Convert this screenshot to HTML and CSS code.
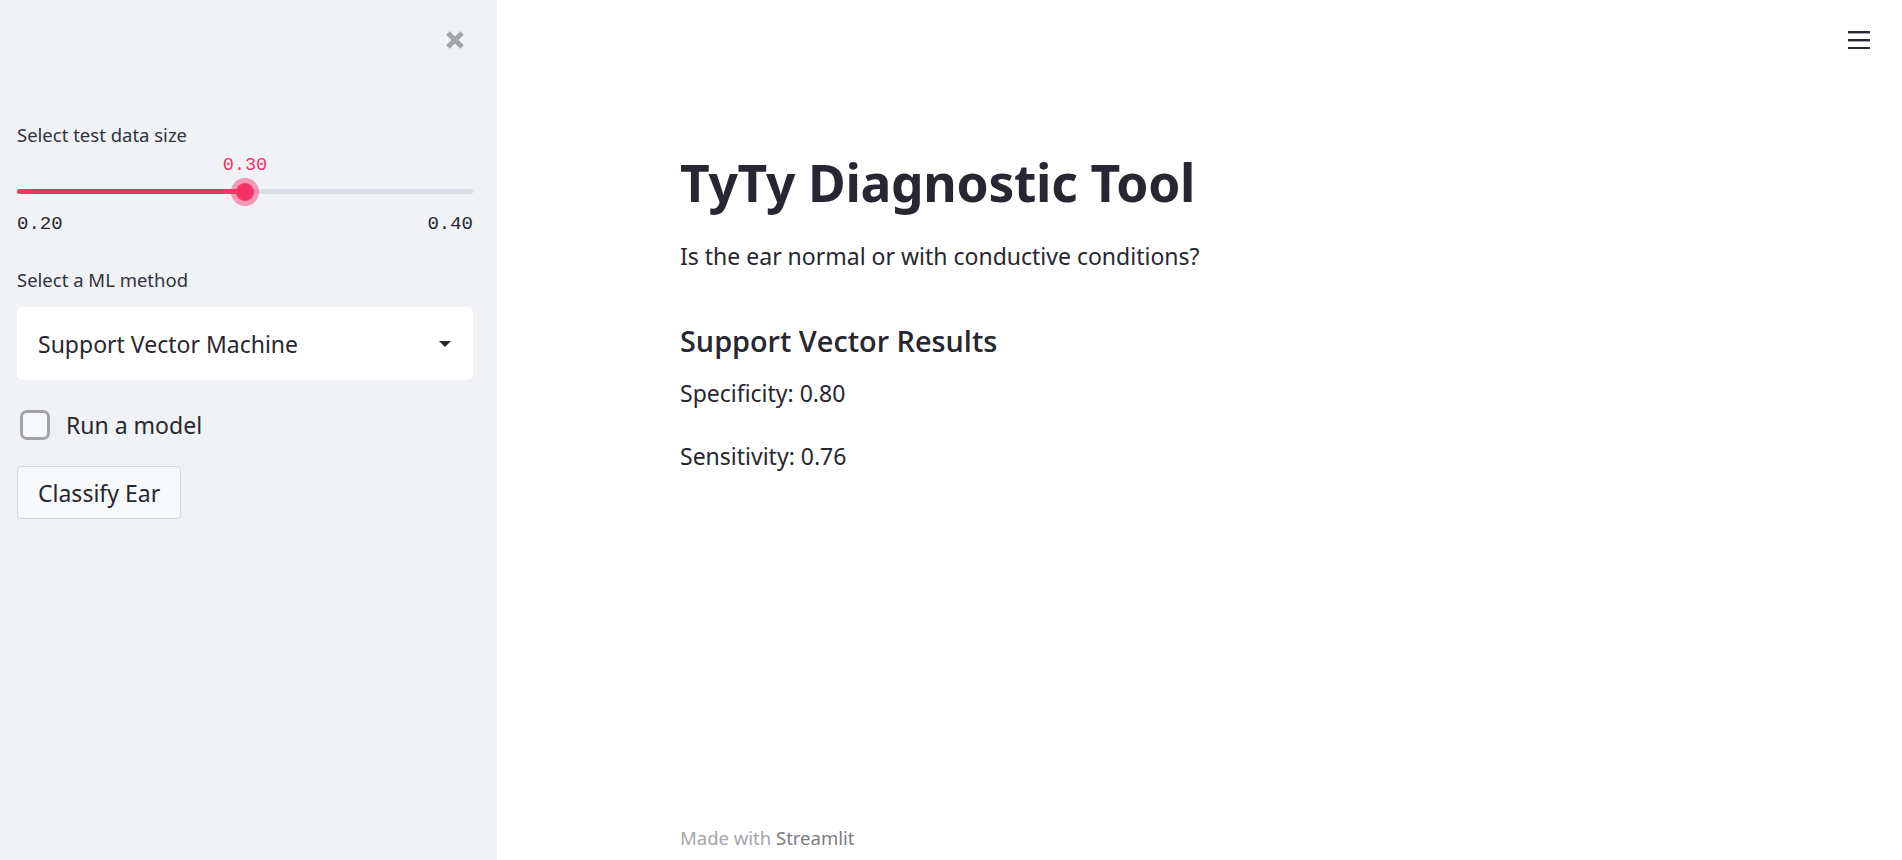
FILE: index.html
```html
<!DOCTYPE html>
<html lang="en">
<head>
<meta charset="utf-8">
<title>TyTy Diagnostic Tool</title>
<link rel="stylesheet" href="styles.css">
</head>
<body>
<aside class="sidebar">
  <div class="close-row">
    <svg class="close-icon" width="20" height="20" viewBox="0 0 20 20" aria-label="Close sidebar">
      <path d="M3 3 L17 17 M17 3 L3 17" stroke="#a3a4a9" stroke-width="5" stroke-linecap="butt"/>
    </svg>
  </div>

  <div class="widget slider-widget">
    <div class="widget-label">Select test data size</div>
    <div class="slider">
      <div class="slider-value">0.30</div>
      <div class="slider-track">
        <div class="slider-fill" style="width: 50%"></div>
        <div class="slider-thumb" style="left: 50%"></div>
      </div>
      <div class="slider-ticks"><span>0.20</span><span>0.40</span></div>
    </div>
  </div>

  <div class="widget select-widget">
    <div class="widget-label">Select a ML method</div>
    <div class="select-box">
      <span>Support Vector Machine</span>
      <svg class="caret" width="12" height="6" viewBox="0 0 12 6"><path d="M0 0 H12 L6 6 Z" fill="#262730"/></svg>
    </div>
  </div>

  <label class="checkbox-row">
    <span class="checkbox"></span>
    <span class="checkbox-label">Run a model</span>
  </label>

  <button class="btn">Classify Ear</button>
</aside>

<main class="main">
  <div class="topbar">
    <svg class="menu-icon" width="22" height="18" viewBox="0 0 22 18" aria-label="Menu">
      <rect x="0" y="0" width="22" height="2.4" fill="#262730"/>
      <rect x="0" y="8" width="22" height="2.4" fill="#262730"/>
      <rect x="0" y="16" width="22" height="2.4" fill="#262730"/>
    </svg>
  </div>
  <div class="content">
    <h1 class="title">TyTy Diagnostic Tool</h1>
    <p class="subtitle">Is the ear normal or with conductive conditions?</p>
    <h3 class="section-title">Support Vector Results</h3>
    <p class="metric">Specificity: 0.80</p>
    <p class="metric">Sensitivity: 0.76</p>
  </div>
  <footer class="footer">Made with <span class="footer-brand">Streamlit</span></footer>
</main>
</body>
</html>
```

FILE: styles.css
```css
* { box-sizing: border-box; }

html, body {
  margin: 0;
  height: 100%;
}

body {
  display: flex;
  font-family: "Noto Sans", "Open Sans", sans-serif;
  color: #262730;
  background: #ffffff;
  overflow: hidden;
}

/* Sidebar */
.sidebar {
  width: 497px;
  flex: 0 0 497px;
  background: #f0f2f6;
  padding: 30px 24px 0 17px;
  display: flex;
  flex-direction: column;
}

.close-row {
  display: flex;
  justify-content: flex-end;
  padding-right: 8px;
  height: 20px;
}

.close-icon { display: block; }

.widget-label {
  font-size: 18.5px;
  line-height: 22px;
  color: #31333f;
}

.slider-widget {
  margin-top: 74px;
}

.slider {
  position: relative;
  padding-top: 10px;
}

.slider-value {
  font-family: "Liberation Mono", "DejaVu Sans Mono", monospace;
  font-size: 18.5px;
  line-height: 20px;
  color: #f63366;
  text-align: center;
  width: 60px;
  margin-left: 198px;
}

.slider-track {
  position: relative;
  height: 5px;
  margin-top: 13px;
  border-radius: 3px;
  background: #d9dde6;
}

.slider-fill {
  height: 100%;
  border-radius: 3px;
  background: #f63366;
}

.slider-thumb {
  position: absolute;
  top: 50%;
  width: 18px;
  height: 18px;
  margin-left: -9px;
  margin-top: -9px;
  border-radius: 50%;
  background: #f63366;
  box-shadow: 0 0 0 5px rgba(246, 51, 102, 0.45);
}

.slider-ticks {
  display: flex;
  justify-content: space-between;
  margin-top: 20px;
  font-family: "Liberation Mono", "DejaVu Sans Mono", monospace;
  font-size: 19px;
  line-height: 20px;
  color: #262730;
}

.select-widget {
  margin-top: 35px;
}

.select-box {
  margin-top: 16px;
  height: 73px;
  background: #ffffff;
  border-radius: 6px;
  display: flex;
  align-items: center;
  justify-content: space-between;
  padding: 0 22px 0 21px;
  font-size: 23px;
}

.caret { display: block; }

.checkbox-row {
  display: flex;
  align-items: center;
  gap: 16px;
  margin-top: 29px;
  padding-left: 3px;
}

.checkbox {
  width: 30px;
  height: 30px;
  border: 3px solid #a3a4a9;
  border-radius: 7px;
  background: #f7f8fa;
}

.checkbox-label {
  font-size: 23px;
}

.btn {
  align-self: flex-start;
  margin-top: 25px;
  height: 53px;
  padding: 0 20px;
  font-family: inherit;
  font-size: 23px;
  color: #262730;
  background: #f8f9fb;
  border: 1px solid #d4d6dc;
  border-radius: 4px;
}

/* Main */
.main {
  flex: 1;
  display: flex;
  flex-direction: column;
  position: relative;
}

.topbar {
  display: flex;
  justify-content: flex-end;
  padding: 31px 32px 0 0;
  height: 60px;
}

.menu-icon { display: block; }

.content {
  padding-left: 183px;
}

.title {
  margin: 90px 0 0;
  font-size: 51.5px;
  font-weight: 700;
  line-height: 64px;
  letter-spacing: -0.3px;
}

.subtitle {
  margin: 27px 0 0;
  font-size: 23px;
  line-height: 30px;
}

.section-title {
  margin: 52px 0 0;
  font-family: "Open Sans", "Noto Sans", sans-serif;
  font-size: 28.8px;
  font-weight: 600;
  line-height: 36px;
}

.metric {
  margin: 19px 0 0;
  font-size: 23px;
  line-height: 30px;
}

.metric + .metric {
  margin-top: 33px;
}

.footer {
  margin-top: auto;
  padding: 0 0 10px 183px;
  font-size: 18.5px;
  line-height: 24px;
  color: #a4a5aa;
}

.footer-brand {
  color: #7b7c82;
}
```
